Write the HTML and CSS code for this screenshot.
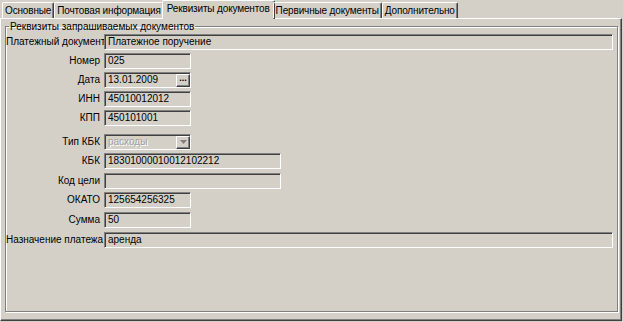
FILE: index.html
```html
<!DOCTYPE html>
<html lang="ru">
<head>
    <meta charset="UTF-8">
    <title>Реквизиты документов</title>
    <link rel="stylesheet" href="styles.css">
</head>
<body>

    <div class="tabs">
        <div class="tab">Основные</div>
        <div class="tab">Почтовая информация</div>
        <div class="tab active">Реквизиты документов</div>
        <div class="tab">Первичные документы</div>
        <div class="tab">Дополнительно</div>
    </div>

    <div class="panel">
        <fieldset class="group">
            <legend>Реквизиты запрашиваемых документов</legend>

            <div class="row">
                <label>Платежный документ</label>
                <div class="field full">Платежное поручение</div>
            </div>
            <div class="row first">
                <label>Номер</label>
                <div class="field short">025</div>
            </div>
            <div class="row">
                <label>Дата</label>
                <div class="field short">13.01.2009<span class="btn dots">...</span></div>
            </div>
            <div class="row">
                <label>ИНН</label>
                <div class="field short">45010012012</div>
            </div>
            <div class="row before-combo">
                <label>КПП</label>
                <div class="field short">450101001</div>
            </div>
            <div class="row">
                <label>Тип КБК</label>
                <div class="field short disabled">расходы<span class="btn arrow"><svg width="7" height="4" viewBox="0 0 7 4"><path d="M0 0H7L3.5 4Z" fill="#808080"/></svg></span></div>
            </div>
            <div class="row loose">
                <label>КБК</label>
                <div class="field medium">18301000010012102212</div>
            </div>
            <div class="row">
                <label>Код цели</label>
                <div class="field medium"></div>
            </div>
            <div class="row loose">
                <label>ОКАТО</label>
                <div class="field short">125654256325</div>
            </div>
            <div class="row loose">
                <label>Сумма</label>
                <div class="field short">50</div>
            </div>
            <div class="row">
                <label>Назначение платежа</label>
                <div class="field full">аренда</div>
            </div>
        </fieldset>
    </div>

</body>
</html>
```

FILE: styles.css
```css
body {
    margin: 0;
    background-color: #d4d0c8;
    font-family: "Liberation Sans", Arial, sans-serif;
    font-size: 10px;
    color: #000;
    width: 623px;
    height: 322px;
    overflow: hidden;
}
.tabs {
    display: flex;
    align-items: flex-end;
    height: 18px;
    padding-left: 2px;
    position: relative;
    z-index: 1;
}
.tab {
    height: 15px;
    line-height: 15px;
    padding: 0 2px;
    letter-spacing: -0.15px;
    border-top: 1px solid #fff;
    border-left: 1px solid #fff;
    border-right: 1px solid #404040;
    box-shadow: inset -1px 0 0 #808080;
    border-radius: 2px 2px 0 0;
    white-space: nowrap;
}
.tab.active {
    height: 18px;
    line-height: 16px;
    margin: 0 -2px -1px;
    padding: 0 4px;
    background-color: #d4d0c8;
}
.panel {
    height: 300px;
    border-top: 1px solid #fff;
    border-left: 1px solid #fff;
    border-right: 1px solid #404040;
    border-bottom: 1px solid #404040;
    box-shadow: inset -1px -1px 0 #808080;
    margin-right: 1px;
    padding: 1px 3px 0 4px;
}
.group {
    margin: 0;
    padding: 1px 2px 0 0;
    height: 289px;
    border: 1px solid #808080;
    box-shadow: inset 1px 1px 0 #fff, 1px 1px 0 #fff;
}
.group legend {
    padding: 0 1px;
    margin-left: 3px;
    line-height: 13px;
}
.row {
    display: flex;
    align-items: center;
    height: 15px;
    margin-bottom: 4px;
}
.row.first {
    margin-top: 1px;
}
.row.loose {
    margin-bottom: 5px;
}
.row.before-combo {
    margin-bottom: 9px;
}
.row label {
    width: 94px;
    margin-right: 4px;
    text-align: right;
    white-space: nowrap;
}
.field {
    position: relative;
    box-sizing: border-box;
    height: 16px;
    line-height: 13px;
    padding-left: 3px;
    border-top: 1px solid #808080;
    border-left: 1px solid #808080;
    border-right: 1px solid #fff;
    border-bottom: 1px solid #fff;
    box-shadow: inset 1px 1px 0 #404040;
    white-space: nowrap;
}
.field.short {
    width: 87px;
}
.field.medium {
    width: 177px;
}
.field.full {
    flex: 1;
    margin-right: 2px;
}
.field.disabled {
    color: #a0a0a0;
    text-shadow: 1px 1px 0 #fff;
}
.btn {
    position: absolute;
    top: 1px;
    right: 0;
    width: 14px;
    height: 13px;
    box-sizing: border-box;
    border-top: 1px solid #fff;
    border-left: 1px solid #fff;
    border-right: 1px solid #404040;
    border-bottom: 1px solid #404040;
    box-shadow: inset -1px -1px 0 #808080;
    display: flex;
    align-items: center;
    justify-content: center;
}
.btn.dots {
    color: #000;
    font-weight: bold;
    font-size: 9px;
    line-height: 6px;
    align-items: flex-start;
}
```
